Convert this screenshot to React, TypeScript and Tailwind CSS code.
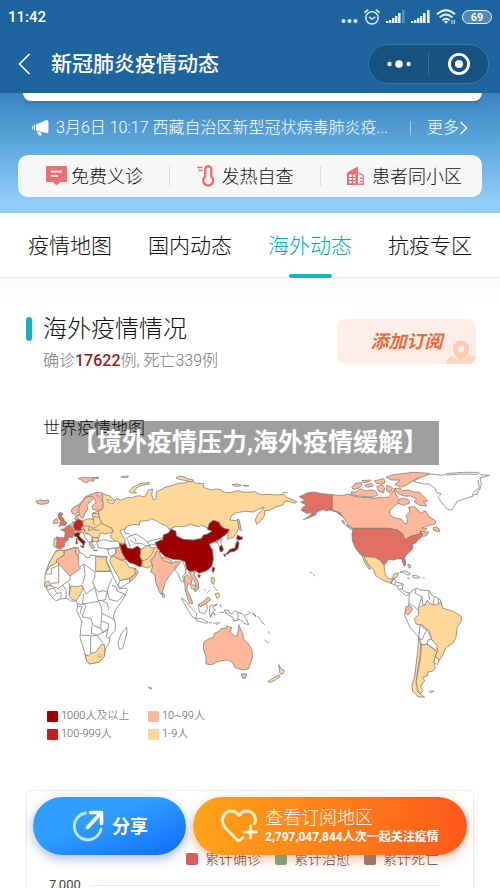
type Shape = [fill: string, d: string];

const C = {
  top: "#9c0000",
  high: "#c5201c",
  mid: "#e07062",
  low: "#ffb99a",
  few: "#ffd899",
  none: "#ffffff",
};

const EUROPE_AFRICA: Shape[] = [
  [C.low, "M18 122L24 124L30 119L42 122L55 120L56 128L45 132L32 133L22 130Z"],
  [C.low, "M144 55L165 52L180 54L205 51L207 54L188 58L192 64L178 62L172 68L160 65L152 59Z"],
  [C.none, "M272 50L295 48L294 52L280 53Z"],
  [C.few, "M297 95L308 82L330 71L357 67L358 72L332 77L318 85L312 94L320 98L304 99Z"],
  // Russia
  [C.few, "M218 100L226 104L240 108L253 120L248 124L230 118L236 128L250 131L258 116L275 120L290 113L308 112L325 107L345 110L355 90L368 87L365 105L370 120L378 117L379 95L395 88L405 82L430 75L445 70L460 69L485 62L500 70L522 71L520 82L532 86L545 90L556 87L570 88L578 94L590 98L605 97L625 92L638 96L650 97L675 95L684 101L695 104L720 103L740 105L762 103L770 112L790 120L800 125L795 130L780 125L765 123L758 135L735 142L722 150L704 152L704 165L695 180L680 193L676 180L682 165L695 152L702 142L685 148L670 156L645 154L620 158L605 166L600 180L618 182L626 178L628 195L622 215L610 232L592 238L597 210L580 205L568 188L555 183L545 195L535 205L515 196L505 200L480 192L470 198L455 200L435 200L418 208L410 198L395 192L380 183L365 176L356 181L345 182L330 184L328 195L310 193L290 200L283 208L270 212L275 224L285 238L284 250L268 250L250 240L240 228L250 215L245 205L225 195L215 190L208 175L205 155L218 146Z"],
  [C.low, "M124 150L130 142L145 135L158 122L166 110L180 104L196 98L214 97L217 104L212 112L220 130L218 146L205 151L188 148L186 138L198 128L192 114L184 122L170 135L174 147L166 158L158 175L150 170L146 155L134 164L126 160Z"],
  [C.none, "M146 155L148 138L160 122L168 112L186 108L192 114M196 100L206 112"],
  [C.few, "M160 182L175 176L190 178L186 160L205 153L208 175L215 190L225 195L245 205L250 215L236 220L225 222L212 218L206 234L188 232L175 222L160 212L158 195Z"],
  [C.none, "M188 160L206 162M188 170L207 172M158 198L178 198L190 205L215 190M190 178L192 195M178 198L175 212L188 208L208 212"],
  [C.mid, "M86 160L93 157L98 162L94 170L101 175L103 182L110 188L107 196L95 196L86 200L92 192L88 188L93 184L86 176L84 168Z"],
  [C.low, "M72 180L80 175L84 183L80 191L70 190Z"],
  [C.mid, "M92 208L103 207L106 202L118 196L130 206L132 215L128 232L118 232L112 236L104 233L106 216Z"],
  [C.low, "M120 194L130 184L133 190L131 205Z"],
  [C.low, "M135 176L138 166L146 163L143 170L147 177L138 180Z"],
  [C.high, "M132 188L140 180L147 178L157 182L159 198L153 204L156 210L146 214L134 210L131 198Z"],
  [C.low, "M132 212L150 213L160 207L166 211L160 218L146 217L132 220Z"],
  [C.top, "M132 222L145 217L151 221L147 227L155 236L168 247L163 249L162 257L158 254L155 248L146 241L140 230L133 229Z"],
  [C.top, "M138 236l3 0l0 5l-3 0ZM138 243l4 0l0 9l-4 0ZM151 258l11 0l-2 6Z"],
  [C.mid, "M78 231L106 234L116 238L104 249L103 260L90 267L78 263L81 245Z"],
  [C.few, "M73 236L82 236L78 262L71 259Z"],
  [C.none, "M160 220L175 222L187 232L184 246L176 247L165 232Z"],
  [C.low, "M177 248L190 244L186 251L193 262L188 267L180 257Z"],
  [C.few, "M188 232L207 234L205 244L188 244Z"],
  [C.none, "M200 247L215 240L228 240L240 244L262 244L270 252L268 262L250 264L232 267L220 265L205 263Z"],
  [C.none, "M190 270L202 271L192 272Z"],
  // Africa
  [C.none, "M78 272L85 270L100 272L130 264L145 263L147 275L165 286L168 292L178 293L182 285L200 288L232 290L228 300L240 325L245 338L250 352L258 365L268 386L288 384L292 390L284 410L272 428L256 450L250 470L256 492L255 512L240 528L238 548L228 562L222 590L208 606L178 612L170 600L160 565L150 532L153 500L156 485L140 452L143 432L138 422L125 424L110 415L92 417L78 422L62 408L52 390L44 375L46 338L58 312L68 292Z"],
  [C.few, "M78 273L98 270L103 283L86 296L76 312L60 318L48 338L56 312L68 290Z"],
  [C.low, "M103 273L130 264L139 264L136 278L146 290L146 318L152 325L120 348L80 305L79 300L103 285Z"],
  [C.few, "M138 264L145 263L148 278L143 290L137 278Z"],
  [C.few, "M197 289L214 292L232 290L228 300L240 334L197 334Z"],
  [C.few, "M122 378L140 380L155 376L160 385L150 405L138 422L125 418L117 405Z"],
  [C.few, "M44 370L55 362L64 378L50 376L52 384L44 380Z"],
  [C.few, "M165 583L175 588L182 580L198 576L215 553L222 552L225 570L222 590L208 606L178 612L170 603Z"],
  [C.none, "M209 582l5 5l-6 5l-4 -5Z"],
  [C.none, "M290 502L291 516L278 566L268 568L264 548L273 522Z"],
  [C.none, "M150 320L162 312L195 336L195 350L188 365L194 382L168 402L162 390L156 376M162 312L165 345L158 372M46 342L64 342L64 326L86 316M86 310L86 368L64 370M120 348L120 360L98 375L84 386L64 378M98 375L108 390L108 415M92 417L94 398L80 400L72 385L52 390M118 370L118 405M70 410L80 400"],
  [C.none, "M197 334L245 334M194 382L206 396L220 392L232 396L236 378L246 356M232 396L238 418L262 424L284 402L262 394L258 380L246 376M232 396L226 420L205 422L194 382M160 402L158 432L143 433M158 432L205 424L214 440L216 460L250 478M158 432L168 438L156 470L184 476L188 495L212 505L214 480L216 460M152 525L190 528L202 526L184 520L186 498M202 526L234 508L236 492L214 482M182 530L182 580M202 526L218 548M212 505L220 518L234 508L228 530L238 536M218 424L232 430L236 450M143 440L156 438L150 462"],
  // Middle East and Central Asia
  [C.none, "M232 268L258 264L257 282L245 290L238 286Z"],
  [C.low, "M258 266L270 260L276 276L288 298L272 300L245 288L258 280Z"],
  [C.few, "M242 292L250 288L272 300L286 304L298 322L318 326L316 342L298 356L270 362L262 345L250 325L240 305Z"],
  [C.none, "M270 362L298 356L300 366L270 385L264 375Z"],
  [C.low, "M314 326L325 335L316 352L300 366L298 356L316 342Z"],
  [C.top, "M268 250L276 254L286 250L292 264L308 266L322 258L332 266L331 290L336 302L336 318L328 320L312 312L298 308L286 296L276 278Z"],
  [C.none, "M290 200L283 212L288 222L296 220L302 228L290 234L296 244L300 260M302 228L318 222L340 236L352 246L370 240L400 234M300 240L314 250L334 250L352 262L364 252L378 256M314 232L318 246M352 246L362 258"],
];

const ASIA_PACIFIC: Shape[] = [
  [C.few, "M138 54L148 48L160 50L172 56L190 60L186 66L168 62L150 58Z"],
  [C.few, "M306 74L320 72L334 76L320 80Z"],
  [C.few, "M340 76L357 77L345 79Z"],
  [C.few, "M322 178L328 182L334 212L328 208Z"],
  [C.few, "M33 268L44 262L54 256L66 264L84 262L80 274L74 288L62 300L68 316L52 324L35 318L37 302L30 290Z"],
  [C.none, "M36 302L52 298L66 282L72 266"],
  [C.low, "M78 275L88 275L92 290L110 304L126 310L138 304L155 308L148 322L138 316L132 330L118 347L106 365L101 385L94 404L88 396L78 368L74 342L62 336L68 318L62 302L74 290Z"],
  [C.few, "M96 292L110 296L126 303L124 310L98 301Z"],
  [C.few, "M98 398L105 405L103 413L97 410Z"],
  [C.top, "M75 248L92 240L98 240L100 225L116 218L123 207L137 213L140 228L160 238L190 240L215 235L220 225L232 222L246 214L232 208L238 190L250 181L266 186L272 198L284 206L298 208L290 222L278 230L268 238L255 245L238 252L242 262L248 270L250 298L245 320L230 332L208 340L195 332L180 335L170 328L165 305L150 300L128 298L105 290L90 275L82 262Z"],
  [C.top, "M204 344l7 1l-2 8l-5 -3ZM248 321L255 324L250 338L246 332Z"],
  [C.none, "M255 245L264 243L276 236L272 248L276 256L268 260L264 250Z"],
  [C.top, "M268 260L276 256L280 268L276 276L270 274Z"],
  [C.top, "M322 224L330 230L338 231L336 238L326 240L320 238ZM322 242L327 250L324 266L314 274L300 276L294 282L288 282L300 268L315 264L318 250ZM281 281L288 284L284 291Z"],
  [C.none, "M150 308L156 302L165 320L168 340L158 348L162 366L152 362L144 340L134 330Z"],
  [C.low, "M163 350L172 344L186 358L183 373L173 372L170 388L182 412L188 430L178 430L172 412L166 392Z"],
  [C.low, "M176 336L196 334L192 344L205 366L206 384L196 396L192 390L200 376L186 352Z"],
  [C.few, "M183 375L197 375L195 388L184 386Z"],
  [C.none, "M154 414L164 420L184 444L200 460L198 476L186 470L168 440Z"],
  [C.none, "M196 476L214 476L234 486L230 490L200 482ZM236 488l10 1M250 490l12 -2M258 494l14 -8"],
  [C.low, "M205 434L218 426L234 411L242 418L230 430L212 440Z"],
  [C.none, "M205 434L212 440L230 430L232 446L224 462L208 456Z"],
  [C.none, "M240 438L262 433L246 443L256 450L250 454L256 466L246 458L242 472L238 456ZM270 432l3 10M268 456l14 2"],
  [C.few, "M244 352L252 352L254 366L250 374L244 366ZM255 402L266 398L269 410L262 416Z"],
  [C.none, "M250 378l6 8M256 388l8 4M232 398l8 -8M224 388l2 6"],
  [C.none, "M283 450L296 450L298 460L306 462L314 452L340 464L350 478L356 494L342 490L330 478L312 484L308 472L290 462ZM324 456L324 482M345 466l14 -6M356 454l8 8"],
  [C.none, "M368 458l10 10l-2 2ZM380 468l10 8M390 478l6 10M396 488l8 6M404 540l12 10M414 514l6 8"],
  [C.low, "M222 545L238 536L250 532L254 520L266 514L276 504L288 506L290 498L306 503L300 516L318 531L324 516L327 494L332 510L338 518L340 536L354 550L366 570L367 592L356 626L342 630L330 628L314 622L308 608L294 600L276 602L260 606L246 614L228 612L228 592L220 566Z"],
  [C.low, "M334 641L350 642L346 655L338 655Z"],
  [C.few, "M446 614L452 626L464 632L456 644L450 640ZM446 644L450 650L436 660L420 668L414 664L430 654Z"],
  [C.none, "M56 680l4 4l6 0l-4 3l-4 -1Z"],
];

const NORTH_AMERICA: Shape[] = [
  [C.mid, "M118 110L132 104L138 100L160 96L185 101L217 104L217 150L235 154L248 162L258 178L240 164L228 156L210 150L195 152L190 148L172 155L166 165L150 172L130 179L146 170L158 158L140 160L124 151L128 142L140 136L122 126L136 121Z"],
  [C.low, "M217 104L232 106L250 106L265 102L280 108L300 112L330 112L342 116L360 112L385 112L395 100L402 88L408 104L416 116L425 126L412 132L404 138L390 150L388 162L400 172L425 178L432 190L440 192L443 180L438 166L450 155L446 142L464 140L474 150L482 160L496 152L506 168L528 184L525 192L508 196L486 204L500 206L496 214L485 215L478 225L455 228L434 240L428 222L412 210L385 205L280 205L265 196L256 180L240 158L217 150Z"],
  [C.low, "M520 203L530 200L538 208L538 216L520 210ZM484 222L506 214L500 226L490 230Z"],
  [C.low, "M274 96L288 96L300 86L316 92L334 90L345 92L354 104L340 112L318 110L296 108L274 104Z"],
  [C.low, "M275 84L286 70L304 68L306 76L296 84L284 88Z"],
  [C.low, "M306 62L332 60L326 66L310 68ZM314 76L334 70L340 78L322 82ZM344 62L372 56L376 68L362 72L350 70ZM350 80L366 74L374 84L370 98L356 94ZM380 76L392 80L398 84L390 100L380 92Z"],
  [C.low, "M378 52L400 44L420 42L460 37L508 40L495 48L465 58L445 72L425 82L405 74L420 60L394 60Z"],
  [C.low, "M402 86L420 84L428 92L444 90L465 97L478 96L500 118L502 124L490 124L500 138L480 136L462 126L470 116L452 108L430 108L415 100Z"],
  [C.low, "M412 124L426 114L446 120L450 128L434 136L418 132Z"],
  [C.none, "M460 64L482 52L510 42L545 46L566 40L610 37L655 37L662 44L688 46L660 54L664 70L660 88L654 92L652 104L636 102L640 108L610 118L592 124L584 136L576 151L560 146L544 126L534 112L544 102L530 98L526 86L508 72L490 72Z"],
  [C.none, "M560 45L600 42L655 43M654 60L658 84L640 96"],
  [C.mid, "M280 205L385 205L412 210L428 222L434 240L455 228L478 222L483 212L488 228L474 240L466 250L458 252L458 266L440 284L434 294L438 314L432 318L425 296L412 296L400 300L384 298L378 310L372 316L360 300L345 294L318 290L300 282L285 262L277 240L276 222Z"],
  [C.low, "M256 194L268 198L282 210L272 208Z"],
  [C.low, "M246 180l6 4l2 8l-6 -4Z"],
  [C.none, "M148 335l8 4M158 341l8 8M66 98l16 0M444 312l8 4l-4 8l-4 -4Z"],
];

const LATIN_AMERICA: Shape[] = [
  [C.few, "M63 -17L78 -10L105 -8L120 0L132 16L136 44L146 57L158 55L162 42L176 38L172 50L162 56L154 70L132 62L108 48L102 32L84 10Z"],
  [C.few, "M66 -14L73 -10L80 8L92 28L86 26L76 12Z"],
  [C.none, "M158 56L166 60L168 66L190 72L186 88L196 96L208 98L208 104L196 106L176 88L170 76L152 70ZM166 66L164 76M172 78L188 74M178 88L188 86"],
  [C.none, "M180 36L194 32L212 42L204 46L192 38ZM218 46L234 48L240 54L220 54ZM202 54l8 2M248 54l6 1M204 14l8 6l-4 6"],
  [C.none, "M208 104L218 90L232 84L240 90L268 92L276 106L300 118L306 134L290 150L245 240L236 232L210 202L194 166L196 152L206 136Z"],
  [C.none, "M228 86L226 100L246 110L248 134L256 134M268 92L266 106L270 122M282 112L280 132M296 116L294 132M246 110L236 140M206 130L220 138L236 152"],
  [C.low, "M198 140L212 138L218 148L204 165L196 158Z"],
  [C.none, "M240 195L236 232L245 255L262 252L292 275L292 256L275 238L265 215ZM262 252L264 240L275 238"],
  [C.few, "M262 120L270 132L290 135L302 126L308 144L326 150L340 154L363 168L365 182L352 200L348 232L340 248L318 262L308 286L298 300L285 290L293 272L290 256L275 238L268 212L245 195L228 192L223 176L236 164L235 142L255 136Z"],
  [C.few, "M245 255L260 252L278 265L290 276L285 292L282 308L286 324L278 334L264 336L262 348L248 352L254 362L246 372L242 382L250 392L242 400L232 390L228 365L236 325L242 290Z"],
  [C.few, "M236 232L242 250L240 290L233 330L228 368L234 396L254 412L234 410L218 394L216 375L224 350L230 300L234 260Z"],
  [C.none, "M285 290L298 300L292 314L282 308Z"],
  [C.none, "M268 395l8 -3l6 2l-8 4Z"],
];

const LAYERS = [
  { id: "europe-africa", x: 0, y: 0, shapes: EUROPE_AFRICA },
  { id: "asia-pacific", x: 300, y: 0, shapes: ASIA_PACIFIC },
  { id: "north-america", x: 690, y: 0, shapes: NORTH_AMERICA },
  { id: "latin-america", x: 930, y: 300, shapes: LATIN_AMERICA },
];

function WorldMap() {
  return (
    <svg viewBox="0 0 1380 720" className="block w-full" role="img" aria-label="世界疫情地图">
      {LAYERS.map((layer) => (
        <g
          key={layer.id}
          transform={`translate(${layer.x} ${layer.y})`}
          stroke="#857d78"
          strokeWidth="2.4"
          strokeLinejoin="round"
        >
          {layer.shapes.map(([fill, d]) => (
            // open border lines carry no area of their own
            <path key={d} d={d} fill={d.endsWith("Z") ? fill : "none"} />
          ))}
        </g>
      ))}
    </svg>
  );
}

function SignalBars({ weak = false }: { weak?: boolean }) {
  return (
    <svg width="19" height="14" viewBox="0 0 19 14" fill="#e9f2f9">
      <rect x="0" y="11" width="2.4" height="2" />
      <rect x="3" y="10" width="2.4" height="3" />
      <rect x="6" y="8" width="2.4" height="5" />
      <rect x="9" y="6" width="2.4" height="7" />
      <rect x="12" y="3" width="2.6" height="10" />
      <rect x="16" y="0" width="2.6" height="13" opacity={weak ? 0.3 : 1} />
    </svg>
  );
}

function StatusBar() {
  return (
    <div className="flex h-[34px] items-center justify-between px-2">
      <span className="text-[15px] font-medium">11:42</span>
      <div className="flex items-center gap-[6px]">
        <svg width="17" height="14" viewBox="0 0 17 14" fill="#e9f2f9">
          <circle cx="2.5" cy="11" r="2" />
          <circle cx="8.5" cy="11" r="2" />
          <circle cx="14.5" cy="11" r="2" />
        </svg>
        <svg width="16" height="16" viewBox="0 0 16 16" fill="none" stroke="#e9f2f9" strokeWidth="1.4" strokeLinecap="round">
          <circle cx="8" cy="8.8" r="6.2" />
          <path d="M.8 3.4L3.8.9M15.2 3.4L12.2.9M5.6 8.2L8 10.2L10.8 8.2" />
        </svg>
        <SignalBars weak />
        <SignalBars />
        <svg width="20" height="16" viewBox="0 0 20 16" fill="none" stroke="#e9f2f9" strokeWidth="1.9">
          <path d="M.9 5.2Q10-2.8 19.1 5.2M3.6 8.4Q10 2.8 16.4 8.4M6.3 11.4Q10 8.2 13.7 11.4" />
          <path d="M10 14.8L7.8 12.6Q10 11 12.2 12.6Z" fill="#e9f2f9" stroke="none" />
          <path d="M16 11v4M18.3 11v4" strokeWidth="1" />
        </svg>
        <span className="flex h-[14px] w-[30px] items-center justify-center rounded-full border border-[#e9f2f9] bg-[#4f89b6] text-[11px] font-bold leading-none">
          69
        </span>
      </div>
    </div>
  );
}

function NavBar() {
  return (
    <div className="flex h-[59px] items-center pl-[18px] pr-[11px]">
      <button aria-label="返回" className="mr-5">
        <svg width="13" height="22" viewBox="0 0 13 22" fill="none" stroke="white" strokeWidth="1.6">
          <path d="M11.5 1L1.5 11L11.5 21" />
        </svg>
      </button>
      <h1 className="flex-1 pt-[3px] text-[21px] font-medium">新冠肺炎疫情动态</h1>
      <div className="flex h-10 w-[121px] items-center rounded-full border border-[#3b76a5] bg-[#17517e]">
        <button aria-label="菜单" className="flex flex-1 justify-center">
          <svg width="24" height="8" viewBox="0 0 24 8" fill="white">
            <circle cx="2.5" cy="4" r="2.2" />
            <circle cx="12" cy="4" r="3.8" />
            <circle cx="21.5" cy="4" r="2.2" />
          </svg>
        </button>
        <span className="h-6 w-px bg-[#356b95]" />
        <button aria-label="关闭" className="flex flex-1 justify-center">
          <svg width="24" height="24" viewBox="0 0 24 24">
            <circle cx="12" cy="12" r="9.6" fill="none" stroke="white" strokeWidth="2.8" />
            <circle cx="12" cy="12" r="4" fill="white" />
          </svg>
        </button>
      </div>
    </div>
  );
}

function HornIcon() {
  return (
    <svg width="17" height="16" viewBox="0 0 17 16" fill="white">
      <path d="M4 4.500L14.500 0Q16.500 0 16.500 2V11.500Q16.500 13.500 14.500 13L4 10.500Z" />
      <path d="M2.800 4.500V10.500L1.800 10.300V4.800ZM.8 6V9.300H0V6Z" />
      <path d="M5 11.500L9 12.500L9.500 15.500H7.500Q5.500 14 5 11.500Z" />
    </svg>
  );
}

function ChatIcon() {
  return (
    <svg width="21" height="20" viewBox="0 0 21 20">
      <path d="M1 0h19Q21 0 21 1v14Q21 16 20 16H14l-3.500 3.500L7 16H1Q0 16 0 15V1Q0 0 1 0Z" fill="#ed6f6f" />
      <path d="M5 5.600h11M5 10h7" stroke="white" strokeWidth="1.700" />
    </svg>
  );
}

function ThermometerIcon() {
  return (
    <svg width="18" height="22" viewBox="0 0 18 22" fill="none" stroke="#ed6f6f">
      <path d="M8.200 11.500V4.200a3 3 0 0 1 6 0V11.500a5 5 0 1 1-6 0Z" strokeWidth="2.400" />
      <path d="M0 2.500h5.500M1.500 5.500h4" strokeWidth="1.300" />
    </svg>
  );
}

function BuildingIcon() {
  return (
    <svg width="18" height="20" viewBox="0 0 18 20">
      <path d="M0 6.500L11 .5V19H0Z" fill="#ed6f6f" />
      <path d="M11.500 7L16.200 9.500V18.300H11.500" fill="none" stroke="#ed6f6f" strokeWidth="1.400" />
      <path d="M2.200 8.500h2.500v2.500H2.200ZM6 8.500h2.500v2.500H6ZM2.200 12h2.500v2H2.200ZM6 12h2.500v2H6ZM2.200 15.300h2.500v2H2.200ZM6 15.300h2.500v2H6Z" fill="white" />
      <path d="M13 11.200h1.800v1.800H13ZM13 14.500h1.800v1.800H13Z" fill="#ed6f6f" />
    </svg>
  );
}

function Hero() {
  return (
    <div className="h-[120px] bg-linear-to-b from-[#3b84c0] via-[#5fa9de] via-45% to-[#92cefa] to-90% px-[18px] text-white">
      <div className="ml-[5px] h-2 rounded-b-2xl bg-[#fbfaf6] shadow-md" />
      <div className="flex h-[54px] items-center px-[14px] text-[16px] font-light">
        <span className="mr-[7px]">
          <HornIcon />
        </span>
        <a href="#news" className="min-w-0 flex-1 truncate">
          3月6日 10:17 西藏自治区新型冠状病毒肺炎疫...
        </a>
        <span className="mx-4 h-[14px] w-px bg-white/50" />
        <a href="#more" className="flex items-center">
          更多
          <svg width="9" height="14" viewBox="0 0 9 14" fill="none" stroke="white" strokeWidth="1.300">
            <path d="M1.500 1L7.500 7L1.500 13" />
          </svg>
        </a>
      </div>
      <div className="flex h-[42px] items-center justify-between rounded-[10px] bg-[#f7f7f7] pl-7 pr-5 text-[18px] font-light text-[#111]">
        <a href="#clinic" className="flex items-center gap-1">
          <ChatIcon />
          免费义诊
        </a>
        <span className="h-5 w-px bg-[#dadada]" />
        <a href="#fever" className="flex items-center gap-[7px]">
          <ThermometerIcon />
          发热自查
        </a>
        <span className="h-5 w-px bg-[#dadada]" />
        <a href="#nearby" className="flex items-center gap-[7px]">
          <BuildingIcon />
          患者同小区
        </a>
      </div>
    </div>
  );
}

const TABS = ["疫情地图", "国内动态", "海外动态", "抗疫专区"];

function Tabs() {
  return (
    <nav className="grid h-[65px] grid-cols-4 border-b border-[#e6e6e6] bg-white px-[10px] text-[21px] font-light">
      {TABS.map((tab) => {
        const active = tab === "海外动态";
        return (
          <button
            key={tab}
            className={`relative flex items-center justify-center pt-1 ${active ? "text-[#00abc3]" : "text-[#111]"}`}
          >
            {tab}
            {active && (
              <span className="absolute -bottom-px h-1 w-[43px] rounded-xs bg-[#14b3c9]" />
            )}
          </button>
        );
      })}
    </nav>
  );
}

function SubscribeButton() {
  return (
    <button className="relative h-[45px] w-[139px] overflow-hidden rounded-lg bg-[#ffeee7] text-[18px] font-bold italic text-[#ee6a35]">
      添加订阅
      <svg className="absolute bottom-0 right-0" width="30" height="25" viewBox="0 0 30 25">
        <path d="M0 25Q1 17 7 17L15 24L23 16Q29 17 30 19V25Z" fill="#ffd3c1" />
        <path d="M15 1.500a8.300 8.300 0 0 1 8.300 8.300Q23.300 16 15 23Q6.700 16 6.700 9.800A8.300 8.300 0 0 1 15 1.500Z" fill="#ffcab6" />
        <circle cx="15" cy="10" r="3.200" fill="#ffeee7" />
      </svg>
    </button>
  );
}

function MapLegend() {
  return (
    <ul className="ml-[47px] mt-[7px] grid w-max grid-cols-[101px_auto] text-[11px] font-light leading-[18px] text-[#555]">
      <li className="flex items-center gap-[3px]">
        <span className="size-[11px] rounded-[1px] bg-[#9c0000]" />
        1000人及以上
      </li>
      <li className="flex items-center gap-[3px]">
        <span className="size-[11px] rounded-[1px] bg-[#ffb99a]" />
        10~99人
      </li>
      <li className="flex items-center gap-[3px]">
        <span className="size-[11px] rounded-[1px] bg-[#c5201c]" />
        100-999人
      </li>
      <li className="flex items-center gap-[3px]">
        <span className="size-[11px] rounded-[1px] bg-[#ffd899]" />
        1-9人
      </li>
    </ul>
  );
}

function TrendCard() {
  return (
    <div className="mx-[26px] mt-[47px] h-60 rounded-sm border border-[#ececec] pt-[58px]">
      <ul className="ml-[159px] flex gap-[14px] text-[14px] font-light leading-5 text-[#444]">
        <li className="flex items-center gap-[7px]">
          <span className="size-3 rounded-xs bg-[#dd5b5b]" />
          累计确诊
        </li>
        <li className="flex items-center gap-[7px]">
          <span className="size-3 rounded-xs bg-[#66b284]" />
          累计治愈
        </li>
        <li className="flex items-center gap-[7px]">
          <span className="size-3 rounded-xs bg-[#8f7b73]" />
          累计死亡
        </li>
      </ul>
      <div className="mt-[6px] flex items-center gap-[9px] pl-[22px] pr-[33px] text-[13px] leading-5 text-[#444]">
        7,000
        <span className="h-px flex-1 bg-[#e8e8e8]" />
      </div>
    </div>
  );
}

function FloatingActions() {
  return (
    <div className="absolute inset-x-[33px] bottom-[33px] flex h-[58px] gap-[7px] text-white">
      <button className="flex w-[153px] items-center justify-center gap-2 rounded-full bg-linear-to-br from-[#309dff] from-40% to-[#1569ff] text-[18px] font-bold shadow-[0_4px_12px_rgba(60,90,200,0.4)]">
        <svg width="33" height="33" viewBox="0 0 33 33" fill="none" strokeLinecap="round" strokeLinejoin="round">
          <path d="M14.500 3A13.500 13.500 0 1 0 30 19" stroke="#c4e3ff" strokeWidth="2.800" />
          <path d="M16.500 17.500L29.500 3.500M19.500 2.500H30.500V13.500" stroke="white" strokeWidth="3.600" />
        </svg>
        分享
      </button>
      <button className="flex flex-1 items-center gap-[6px] rounded-full bg-linear-to-r from-[#ffa319] to-[#ff571b] pl-7 text-left shadow-[0_4px_12px_rgba(255,90,30,0.4)]">
        <svg width="38" height="34" viewBox="0 0 38 34" fill="none" stroke="#fff0cf" strokeWidth="2.800" strokeLinecap="round" strokeLinejoin="round">
          <path d="M22 28.500L18.500 31.500Q17.500 32 16.500 31.200L4.500 19Q-.5 13 2.500 7Q5 2 10.500 2Q15 2 18 6.500Q21 2 25.500 2Q31 2 33.500 7Q35.500 11 33.500 14.500" />
          <path d="M29.500 17v12M23.500 23h12" />
        </svg>
        <span>
          <span className="block text-[18px] font-light leading-[22px]">查看订阅地区</span>
          <span className="block text-[12px] font-bold leading-4">2,797,047,844人次一起关注疫情</span>
        </span>
      </button>
    </div>
  );
}

export default function App() {
  return (
    <div className="relative h-screen overflow-hidden bg-white font-['Roboto','Noto_Sans_CJK_SC',sans-serif]">
      <header className="bg-[#1e659f] text-white">
        <StatusBar />
        <NavBar />
      </header>
      <Hero />
      <Tabs />

      <main className="bg-linear-to-b from-[#fafafa] to-white to-3% pt-[37px]">
        <div className="flex justify-between pl-[26px] pr-6">
          <div>
            <div className="flex items-center gap-[11px]">
              <span className="h-6 w-[6px] rounded-full bg-[#14b3c9]" />
              <h2 className="text-[24px] font-light leading-7 text-[#111]">海外疫情情况</h2>
            </div>
            <p className="ml-[17px] mt-[7px] text-[16px] font-light leading-[22px] text-[#777]">
              确诊<span className="font-medium text-[#a01818]">17622</span>例, 死亡339例
            </p>
          </div>
          <div className="pt-1">
            <SubscribeButton />
          </div>
        </div>

        {/* World map */}
        <section className="relative mt-11">
          <h3 className="pl-[43px] text-[17px] font-light leading-6 text-[#111]">世界疫情地图</h3>
          <div className="absolute inset-x-[61px] top-[5px] flex h-11 items-center justify-center whitespace-nowrap bg-black/38 text-[25px] font-bold text-white">
            【境外疫情压力,海外疫情缓解】
          </div>
          <div className="mt-5 pl-[30px] pr-[10px]">
            <WorldMap />
          </div>
          <MapLegend />
        </section>

        <TrendCard />
      </main>

      <FloatingActions />
    </div>
  );
}
